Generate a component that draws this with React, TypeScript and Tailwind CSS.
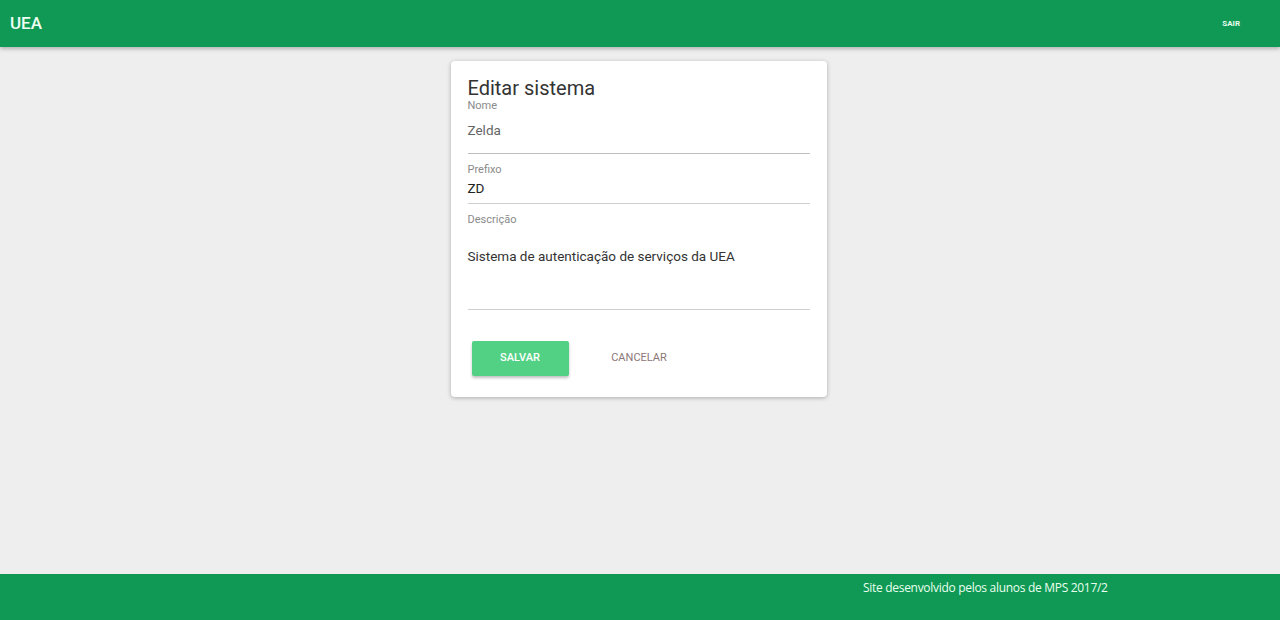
import React from "react";

export default function App() {
  return (
    <div className="w-[1280px] h-[620px] flex flex-col bg-[#eeeeee]" style={{ fontFamily: "Roboto, 'Liberation Sans', sans-serif" }}>
      <header className="h-[47px] shrink-0 bg-[#0f9954] flex items-center justify-between pl-[10px] pr-[40px] shadow-[0_2px_4px_rgba(0,0,0,0.25)] relative z-10">
        <span className="text-[17px] font-medium text-[#f0fff4] leading-none">UEA</span>
        <span className="text-[8px] font-bold text-[#e8fff0] leading-none">SAIR</span>
      </header>
      <main className="flex-1 flex justify-center pt-[14px] pr-[3px]">
        <div className="w-[376px] h-[336px] bg-white rounded-[4px] shadow-[0_1px_4px_rgba(0,0,0,0.28)] pt-[15px] px-[17px] flex flex-col">
          <h1 className="h-[24px] text-[20px] leading-[24px] text-[#333333]">Editar sistema</h1>
          <div className="h-[12px] text-[11px] leading-[12px] text-[#8a8a8a]">Nome</div>
          <div className="h-[42px] pt-[8px] border-b border-[#bdbdbd]">
            <div className="h-[20px] leading-[20px] text-[13.5px] text-[#666666]">Zelda</div>
          </div>
          <div className="mt-[10px] h-[12px] text-[11px] leading-[12px] text-[#8a8a8a]">Prefixo</div>
          <div className="h-[28px] pt-[2px] border-b border-[#cfcfcf]">
            <div className="h-[20px] leading-[20px] text-[13.5px] text-[#222222]">ZD</div>
          </div>
          <div className="mt-[10px] h-[12px] text-[11px] leading-[12px] text-[#8a8a8a]">Descrição</div>
          <div className="h-[84px] pt-[20px] border-b border-[#cfcfcf]">
            <div className="h-[20px] leading-[20px] text-[13.5px] text-[#333333]">Sistema de autenticação de serviços da UEA</div>
          </div>
          <div className="mt-[31px] flex items-center pl-[4px] gap-[25px]">
            <button className="w-[97px] h-[35px] bg-[#52d185] rounded-[2px] text-white text-[11px] font-medium shadow-[0_2px_3px_rgba(0,0,0,0.25)]">SALVAR</button>
            <button className="w-[91px] h-[35px] text-[#8c7676] text-[11px]">CANCELAR</button>
          </div>
        </div>
      </main>
      <footer className="h-[46px] shrink-0 bg-[#0f9954] flex pl-[863px] pt-[6px]">
        <span className="text-[12px] leading-[16px] text-[#eaffef] tracking-[-0.3px]" style={{ fontFamily: "'Open Sans', sans-serif" }}>Site desenvolvido pelos alunos de MPS 2017/2</span>
      </footer>
    </div>
  );
}
